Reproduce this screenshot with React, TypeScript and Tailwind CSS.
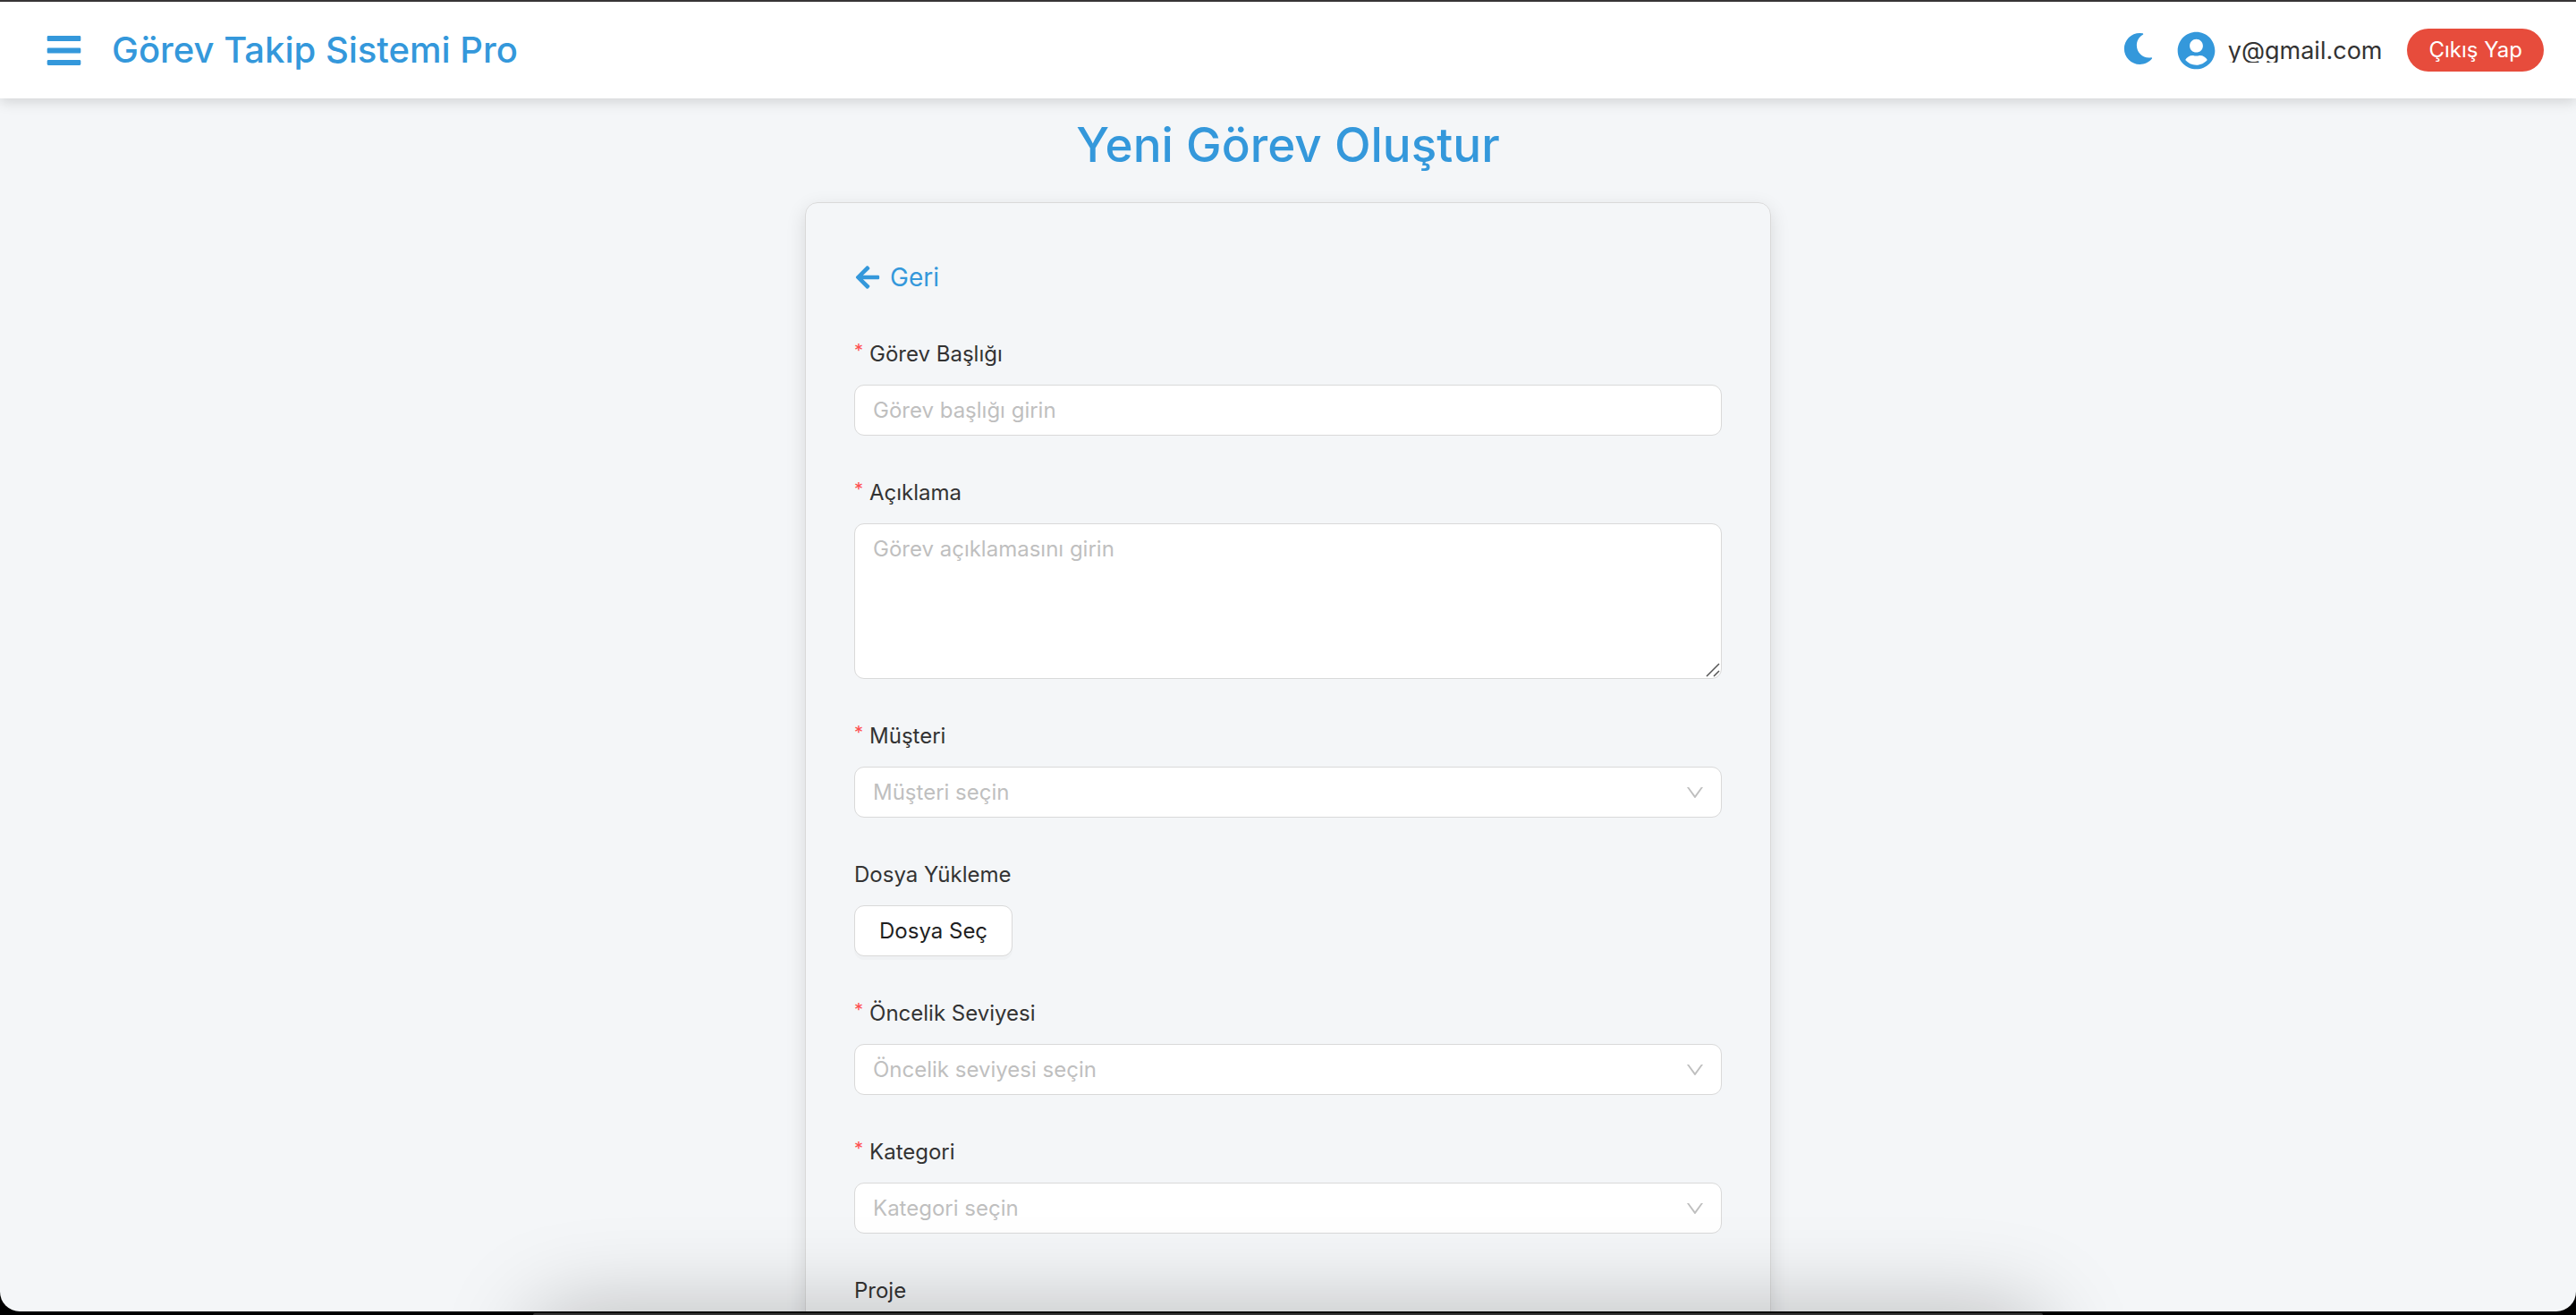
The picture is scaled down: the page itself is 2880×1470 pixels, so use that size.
import { useState } from "react";
import type { ReactNode } from "react";
import { FaArrowLeft, FaBars, FaMoon, FaUserCircle } from "react-icons/fa";
import { AiOutlineDown } from "react-icons/ai";

const controlClass =
  "block w-full rounded-[11px] border border-[#d9d9d9] bg-white px-5 text-[24px] text-[#333333] outline-none focus:border-[#3498db]";

function Header() {
  return (
    <header className="relative z-10 flex h-[108px] shrink-0 items-center justify-between bg-white pr-9 pl-[50px] shadow-[0_4px_14px_rgba(0,0,0,0.14)]">
      <div className="flex items-center gap-8 text-[#3498db]">
        <button type="button" aria-label="Menü" className="cursor-pointer">
          <FaBars size={43} />
        </button>
        <span className="text-[40px] leading-[56px] font-medium">Görev Takip Sistemi Pro</span>
      </div>
      <div className="flex items-center">
        <button type="button" aria-label="Karanlık mod" className="mb-1 cursor-pointer text-[#3498db]">
          <FaMoon size={35} />
        </button>
        <div className="ml-[26px] flex items-center gap-[14px]">
          <FaUserCircle size={43} className="text-[#3498db]" />
          <span className="block h-7 overflow-hidden text-[27px] leading-[30px] text-[#333333]">y@gmail.com</span>
        </div>
        <button
          type="button"
          className="ml-7 h-12 cursor-pointer rounded-full bg-[#e74c3c] px-6 text-[24px] leading-[48px] text-white"
        >
          Çıkış Yap
        </button>
      </div>
    </header>
  );
}

type FieldProps = { id: string; label: string; required?: boolean; children?: ReactNode };

function Field({ id, label, required, children }: FieldProps) {
  return (
    <div className="mb-11">
      <label htmlFor={id} className="mb-[14px] flex h-10 items-center gap-[7px] text-[24px] leading-10 text-[#333333]">
        {required && <span className="self-start text-[20px] leading-8 text-[#ff4d4f]">*</span>}
        {label}
      </label>
      {children}
    </div>
  );
}

type SelectFieldProps = { id: string; label: string; placeholder: string; required?: boolean };

function SelectField({ id, label, placeholder, required }: SelectFieldProps) {
  return (
    <Field id={id} label={label} required={required}>
      <div className="relative">
        <select id={id} defaultValue="" className={`${controlClass} h-[57px] appearance-none text-[#bfbfbf]!`}>
          <option value="" disabled>
            {placeholder}
          </option>
        </select>
        <AiOutlineDown size={24} className="pointer-events-none absolute inset-y-0 right-[18px] my-auto text-[#bfbfbf]" />
      </div>
    </Field>
  );
}

function TaskForm() {
  const [title, setTitle] = useState("");
  const [description, setDescription] = useState("");
  return (
    <form
      className="mx-auto w-full max-w-[1080px] rounded-[14px] border border-[#d9d9d9] px-[54px] pt-[54px] shadow-[0_7px_22px_rgba(0,0,0,0.12)]"
      onSubmit={(event) => event.preventDefault()}
    >
      <a href="#gorevler" className="mb-[38px] flex h-[57px] w-fit items-center gap-[10px] text-[28px] text-[#3498db]">
        <FaArrowLeft size={30} />
        Geri
      </a>
      <Field id="baslik" label="Görev Başlığı" required>
        <input
          id="baslik"
          type="text"
          placeholder="Görev başlığı girin"
          value={title}
          onChange={(event) => setTitle(event.target.value)}
          className={`${controlClass} h-[57px] placeholder:text-[#bfbfbf]`}
        />
      </Field>
      <Field id="aciklama" label="Açıklama" required>
        <div className="relative">
          <textarea
            id="aciklama"
            placeholder="Görev açıklamasını girin"
            value={description}
            onChange={(event) => setDescription(event.target.value)}
            className={`${controlClass} h-[174px] resize-none py-2 leading-10 placeholder:text-[#bfbfbf]`}
          />
          <svg
            viewBox="0 0 16 16"
            className="pointer-events-none absolute right-[2px] bottom-[2px] size-4 fill-none stroke-[#555555]"
            strokeWidth="1.5"
          >
            <path d="M1 15 15 1M9 15l6-6" />
          </svg>
        </div>
      </Field>
      <SelectField id="musteri" label="Müşteri" placeholder="Müşteri seçin" required />
      <Field id="dosya" label="Dosya Yükleme">
        <button
          id="dosya"
          type="button"
          className="block h-[57px] cursor-pointer rounded-[11px] border border-[#d9d9d9] bg-white px-[27px] text-[24px] text-[#1f1f1f] shadow-[0_4px_0_rgba(0,0,0,0.02)]"
        >
          Dosya Seç
        </button>
      </Field>
      <SelectField id="oncelik" label="Öncelik Seviyesi" placeholder="Öncelik seviyesi seçin" required />
      <SelectField id="kategori" label="Kategori" placeholder="Kategori seçin" required />
      <SelectField id="proje" label="Proje" placeholder="Proje seçin" />
    </form>
  );
}

export default function App() {
  return (
    <div className="flex h-screen flex-col border-t-2 border-[#373536] bg-black font-['Inter','Liberation_Sans',sans-serif]">
      <div className="relative flex min-h-0 flex-1 flex-col overflow-hidden rounded-b-[22px] bg-[#f4f6f8]">
        <Header />
        <main className="min-h-0 flex-1 overflow-y-auto px-9 pt-4 [scrollbar-width:none]">
          <h1 className="mb-7 text-center text-[53px] leading-[72px] font-medium text-[#3498db]">
            Yeni Görev Oluştur
          </h1>
          <TaskForm />
        </main>
        <div className="pointer-events-none absolute inset-x-[20.7%] top-full h-24 rounded-t-[40px] shadow-[0_0_100px_rgba(0,0,0,0.26)]" />
      </div>
      <div className="flex h-1 shrink-0 items-end justify-center">
        <div className="h-[2px] w-[58.6%] rounded-t-full bg-[#333333]" />
      </div>
    </div>
  );
}
